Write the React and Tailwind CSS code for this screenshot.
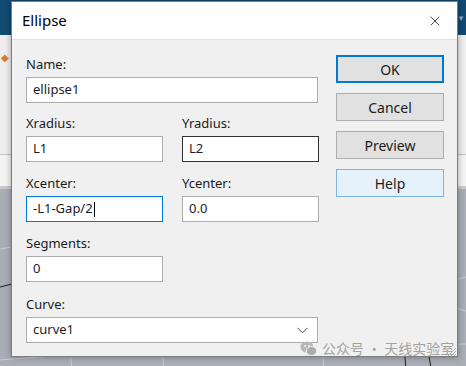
import { X } from 'lucide-react'

const font = "font-['Noto_Sans','Segoe_UI',sans-serif]"

function Field({ label, value, width = 'w-[137px]', border = 'border-[#adadad]', caret = false, className = '' }) {
  return (
    <div className={`flex flex-col ${className}`}>
      <span className="text-[13px] leading-[17px] text-[#1b1b1b] mb-[4px]">{label}</span>
      <div className={`${width} h-[26px] bg-white border ${border} flex items-center px-[6px] text-[13px] text-[#1b1b2b]`}>
        <span>{value}</span>
        {caret && <span className="w-px h-[15px] bg-black ml-[1px]" />}
      </div>
    </div>
  )
}

function Btn({ children, variant }) {
  const styles = {
    ok: 'border-2 border-[#0078d7] bg-[#e1e1e1]',
    normal: 'border border-[#adadad] bg-[#e1e1e1]',
    help: 'border border-[#7eb4ea] bg-[#e5f1fb]',
  }
  return (
    <div className={`w-[108px] h-[28px] flex items-center justify-center text-[14px] text-[#1b1b1b] ${styles[variant]}`}>
      {children}
    </div>
  )
}

function WeChat() {
  return (
    <svg width="17" height="15" viewBox="0 0 17 15">
      <ellipse cx="7" cy="6" rx="6.5" ry="5.5" fill="#b8b8b8" />
      <ellipse cx="11.5" cy="10" rx="5.3" ry="4.5" fill="#acacac" stroke="#f0f0f0" strokeWidth="1" />
      <circle cx="5" cy="5" r="0.9" fill="#f0f0f0" />
      <circle cx="9" cy="5" r="0.9" fill="#f0f0f0" />
    </svg>
  )
}

export default function App() {
  return (
    <div className={`relative w-[466px] h-[366px] overflow-hidden bg-[#a9adb6] ${font}`}>
      {/* background app window */}
      <div className="flex flex-col">
        <div className="h-[35px] bg-[#114a72] flex justify-end items-center pr-[1px]">
          <span className="text-[8px] text-[#8aa6bd] leading-none">▼</span>
        </div>
        <div className="h-[120px] bg-[#eeeeee] border-b border-[#c4c4c4] pt-[8px] pl-[1px]">
          <span className="text-[10px] text-[#e07a20] leading-none">◆</span>
        </div>
        <div className="h-[34px] bg-[#f3f3f3] border-b-[3px] border-[#c9c9c9]" />
        <svg className="block" width="466" height="180" viewBox="0 0 466 180">
          <path d="M0 60 L12 58" stroke="#c9ccd2" strokeWidth="1" fill="none" />
          <path d="M0 98 L12 95" stroke="#1d1d1d" strokeWidth="1" fill="none" />
          <path d="M0 171 L80 165 L240 160 L466 155" stroke="#c9ccd2" strokeWidth="1" fill="none" />
          <path d="M70 163 L72 180 M162 160 L164 180 M322 157 L324 180" stroke="#c9ccd2" strokeWidth="1" fill="none" />
          <path d="M404 159 L406 180 M428 160 L431 180" stroke="#1d1d1d" strokeWidth="1" fill="none" />
          <path d="M458 90 L466 88 M458 120 L466 122" stroke="#c9ccd2" strokeWidth="1" fill="none" />
        </svg>
      </div>

      {/* dialog window */}
      <div className="absolute left-[11px] top-[1px] w-[447px] h-[356px] bg-[#f0f0f0] border border-[#7d7d7d] shadow-[0_0_6px_rgba(0,0,0,0.35)] flex flex-col">
        <div className="h-[38px] shrink-0 bg-white border-b border-[#e3e3e3] flex items-center justify-between pl-[10px] pr-[14px]">
          <span className="text-[15px] text-black">Ellipse</span>
          <X size={16} strokeWidth={1.2} color="#1b1b1b" />
        </div>
        <div className="flex flex-1 pl-[14px] pt-[16px]">
          <div className="flex flex-col w-[296px]">
            <Field label="Name:" value="ellipse1" width="w-[292px]" />
            <div className="flex gap-[19px] mt-[12px]">
              <Field label="Xradius:" value="L1" />
              <Field label="Yradius:" value="L2" border="border-[#333333]" />
            </div>
            <div className="flex gap-[19px] mt-[13px]">
              <Field label="Xcenter:" value="-L1-Gap/2" border="border-[#0078d7]" caret />
              <Field label="Ycenter:" value="0.0" />
            </div>
            <Field label="Segments:" value="0" className="mt-[13px]" />
            <div className="flex flex-col mt-[14px]">
              <span className="text-[13px] leading-[17px] text-[#1b1b1b] mb-[4px]">Curve:</span>
              <div className="w-[292px] h-[26px] bg-white border border-[#adadad] flex items-center justify-between pl-[6px] pr-[9px] text-[13px] text-[#1b1b2b]">
                <span>curve1</span>
                <svg width="11" height="7" viewBox="0 0 11 7">
                  <path d="M0.5 0.8 L5.5 5.8 L10.5 0.8" stroke="#444" strokeWidth="1" fill="none" />
                </svg>
              </div>
            </div>
          </div>
          <div className="flex flex-col gap-[10px] ml-[14px] -mt-[1px]">
            <Btn variant="ok">OK</Btn>
            <Btn variant="normal">Cancel</Btn>
            <Btn variant="normal">Preview</Btn>
            <Btn variant="help">Help</Btn>
          </div>
        </div>
      </div>

      {/* watermark */}
      <div className="absolute left-[300px] top-[339px] flex items-center gap-[5px] text-[14px] text-[#a3a3a3] font-['Noto_Sans_CJK_SC',sans-serif] leading-[18px]">
        <WeChat />
        <span>公众号 · 天线实验室</span>
      </div>
      <svg className="absolute left-[446px] top-[346px]" width="11" height="11" viewBox="0 0 11 11">
        <path d="M10 2 L2 10 M10 5 L5 10 M10 8 L8 10" stroke="#b0b0b0" strokeWidth="1" />
      </svg>
    </div>
  )
}
